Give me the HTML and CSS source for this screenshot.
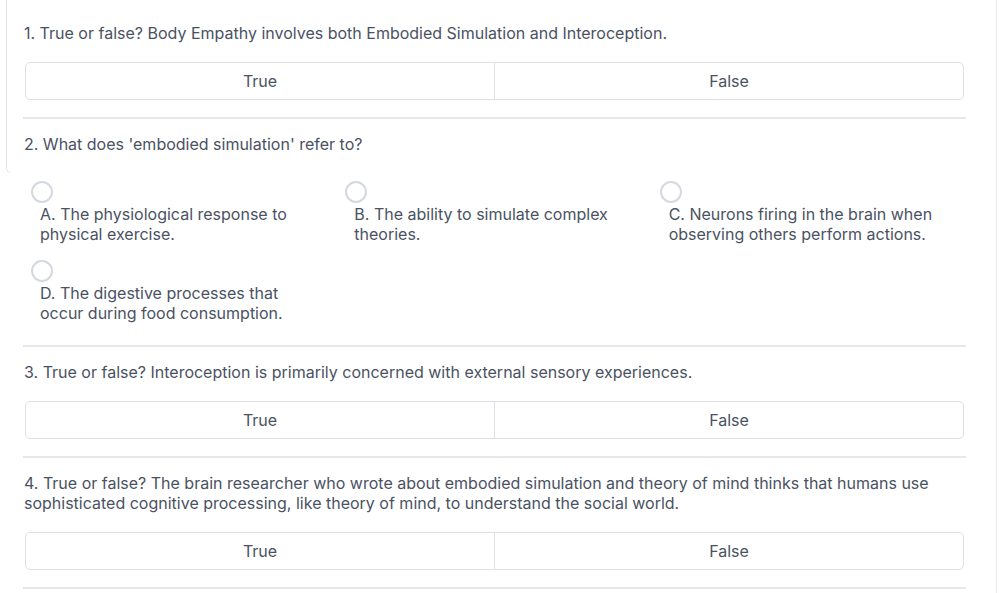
FILE: index.html
```html
<!DOCTYPE html>
<html lang="en">
<head>
<meta charset="utf-8">
<title>Quiz</title>
<link rel="stylesheet" href="styles.css">
</head>
<body>
<div class="page">
  <div class="left-edge"></div>
  <main class="quiz">
    <section class="question">
      <p class="q-text">1. True or false? Body Empathy involves both Embodied Simulation and Interoception.</p>
      <div class="tf">
        <button class="tf-btn">True</button>
        <button class="tf-btn">False</button>
      </div>
    </section>
    <section class="question">
      <p class="q-text">2. What does 'embodied simulation' refer to?</p>
      <div class="options">
        <label class="option"><span class="radio"></span><span class="opt-text">A. The physiological response to physical exercise.</span></label>
        <label class="option"><span class="radio"></span><span class="opt-text">B. The ability to simulate complex theories.</span></label>
        <label class="option"><span class="radio"></span><span class="opt-text">C. Neurons firing in the brain when observing others perform actions.</span></label>
        <label class="option"><span class="radio"></span><span class="opt-text">D. The digestive processes that occur during food consumption.</span></label>
      </div>
    </section>
    <section class="question">
      <p class="q-text">3. True or false? Interoception is primarily concerned with external sensory experiences.</p>
      <div class="tf">
        <button class="tf-btn">True</button>
        <button class="tf-btn">False</button>
      </div>
    </section>
    <section class="question">
      <p class="q-text">4. True or false? The brain researcher who wrote about embodied simulation and theory of mind thinks that humans use sophisticated cognitive processing, like theory of mind, to understand the social world.</p>
      <div class="tf">
        <button class="tf-btn">True</button>
        <button class="tf-btn">False</button>
      </div>
    </section>
  </main>
  <div class="right-edge"></div>
</div>
</body>
</html>
```

FILE: styles.css
```css
* { box-sizing: border-box; }
html, body { margin: 0; padding: 0; background: #ffffff; }
body {
  font-family: Inter, "Noto Sans", "Liberation Sans", sans-serif;
  color: #4a5262;
  font-size: 16px;
  overflow: hidden;
  height: 593px;
}
.page {
  display: flex;
  align-items: flex-start;
  height: 593px;
}
.left-edge {
  flex: 0 0 5px;
  height: 173px;
  margin-left: 6px;
  border-left: 1px solid #e3e5e9;
  border-bottom: 1px solid #e3e5e9;
  border-bottom-left-radius: 6px;
}
.quiz {
  flex: 0 0 943px;
  margin-left: 12px;
  padding-top: 8px;
}
.right-edge {
  flex: 0 0 4px;
  margin-left: 30px;
  height: 593px;
  border-left: 1px solid #e8e9ed;
}
.question {
  padding: 15px 0 17px;
  border-bottom: 2px solid #e6e8eb;
}
.q-text {
  margin: 0;
  padding-left: 1px;
  line-height: 20px;
}
.tf {
  display: flex;
  margin: 19px 2px 0;
  border: 1px solid #dde1e6;
  border-radius: 5px;
  height: 38px;
}
.tf-btn {
  flex: 1 1 0;
  border: 0;
  background: transparent;
  font: inherit;
  color: #4a5262;
  padding: 0;
}
.tf-btn + .tf-btn { border-left: 1px solid #dde1e6; }
.options {
  display: grid;
  grid-template-columns: repeat(3, 1fr);
  row-gap: 16px;
  margin-top: 27px;
  padding-bottom: 5px;
}
.option {
  display: flex;
  flex-direction: column;
  align-items: flex-start;
  padding-left: 8px;
}
.radio {
  width: 22px;
  height: 22px;
  border: 2px solid #d5d9df;
  border-radius: 50%;
  margin-bottom: 2px;
}
.opt-text {
  padding-left: 9px;
  max-width: 285px;
  line-height: 19.5px;
}
```
